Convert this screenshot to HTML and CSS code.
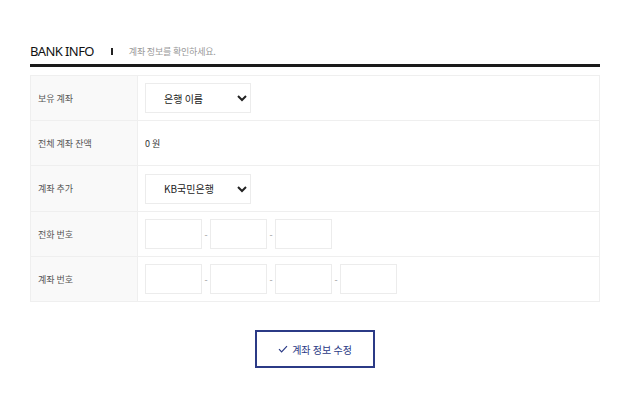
FILE: index.html
```html
<!DOCTYPE html>
<html>
    <head>
        <title>Bank Info</title>
        <meta charset="UTF-8">
        <meta name="viewport" content="width=device-width, initial-scale=1.0">
        <link rel="stylesheet" href="styles.css">
    </head>
    <body>
        <div class="container">
            <div class="title-bar">
                <h2>BANK INFO</h2>
                <span class="divider"></span>
                <p class="sub-text">계좌 정보를 확인하세요.</p>
            </div>

            <table class="info-table">
                <tr>
                    <th>보유 계좌</th>
                    <td>
                        <select class="bank-select">
                            <option>은행 이름</option>
                        </select>
                    </td>
                </tr>
                <tr>
                    <th>전체 계좌 잔액</th>
                    <td><span class="balance">0 원</span></td>
                </tr>
                <tr class="tall">
                    <th>계좌 추가</th>
                    <td>
                        <select class="bank-select">
                            <option>KB국민은행</option>
                        </select>
                    </td>
                </tr>
                <tr>
                    <th>전화 번호</th>
                    <td>
                        <div class="input-group">
                            <input type="text">
                            <span class="dash">-</span>
                            <input type="text">
                            <span class="dash">-</span>
                            <input type="text">
                        </div>
                    </td>
                </tr>
                <tr>
                    <th>계좌 번호</th>
                    <td>
                        <div class="input-group">
                            <input type="text">
                            <span class="dash">-</span>
                            <input type="text">
                            <span class="dash">-</span>
                            <input type="text">
                            <span class="dash">-</span>
                            <input type="text">
                        </div>
                    </td>
                </tr>
            </table>

            <div class="btn-wrap">
                <button class="edit-btn">
                    <svg width="10" height="8" viewBox="0 0 10 8"><path d="M1 4.2 L3.6 6.8 L9 1.2" fill="none" stroke="#2b3a86" stroke-width="1.2"/></svg>
                    계좌 정보 수정
                </button>
            </div>
        </div>
    </body>
</html>
```

FILE: styles.css
```css
* {
    box-sizing: border-box;
    margin: 0;
    padding: 0;
    font-family: 'Noto Sans CJK KR', 'Noto Sans', sans-serif;
}

body {
    background: #fff;
    color: #333;
}

.container {
    width: 570px;
    margin: 39px 0 0 30px;
}

.title-bar {
    display: flex;
    align-items: center;
    height: 24px;
    border-bottom: 3px solid #1a1a1a;
    padding-bottom: 1px;
    box-sizing: content-box;
}

.title-bar h2 {
    font-family: 'Noto Sans', sans-serif;
    font-size: 13px;
    font-weight: 400;
    letter-spacing: -0.6px;
    color: #111;
}

.divider {
    width: 2px;
    height: 7px;
    background: #222;
    margin: 1px 16px 0 17px;
}

.sub-text {
    font-size: 9px;
    color: #999;
    letter-spacing: -0.2px;
}

.info-table {
    width: 100%;
    margin-top: 8px;
    border-collapse: collapse;
    border: 1px solid #efefef;
}

.info-table th,
.info-table td {
    height: 45px;
    border-bottom: 1px solid #efefef;
    font-size: 9px;
    font-weight: 400;
    text-align: left;
    vertical-align: middle;
}

.info-table .tall th,
.info-table .tall td {
    height: 46px;
}

.info-table th {
    width: 107px;
    padding-left: 7px;
    background: #f9f9f9;
    color: #555;
    border-right: 1px solid #efefef;
}

.info-table td {
    padding-left: 7px;
    color: #444;
}

.bank-select {
    width: 106px;
    height: 30px;
    padding-left: 14px;
    border: 1px solid #ececec;
    border-radius: 0;
    background: #fff;
    font-size: 10px;
    color: #222;
    outline: none;
}

.balance {
    font-size: 9px;
    color: #333;
}

.input-group {
    display: flex;
    align-items: center;
}

.input-group input {
    width: 57px;
    height: 30px;
    border: 1px solid #ececec;
    outline: none;
}

.dash {
    width: 8px;
    text-align: center;
    font-size: 9px;
    color: #999;
}

.btn-wrap {
    display: flex;
    justify-content: center;
    margin-top: 28px;
}

.edit-btn {
    display: flex;
    align-items: center;
    justify-content: center;
    gap: 4px;
    width: 120px;
    height: 38px;
    background: #fff;
    border: 2px solid #2b3a86;
    color: #2b3a86;
    font-size: 10px;
    cursor: pointer;
}
```
